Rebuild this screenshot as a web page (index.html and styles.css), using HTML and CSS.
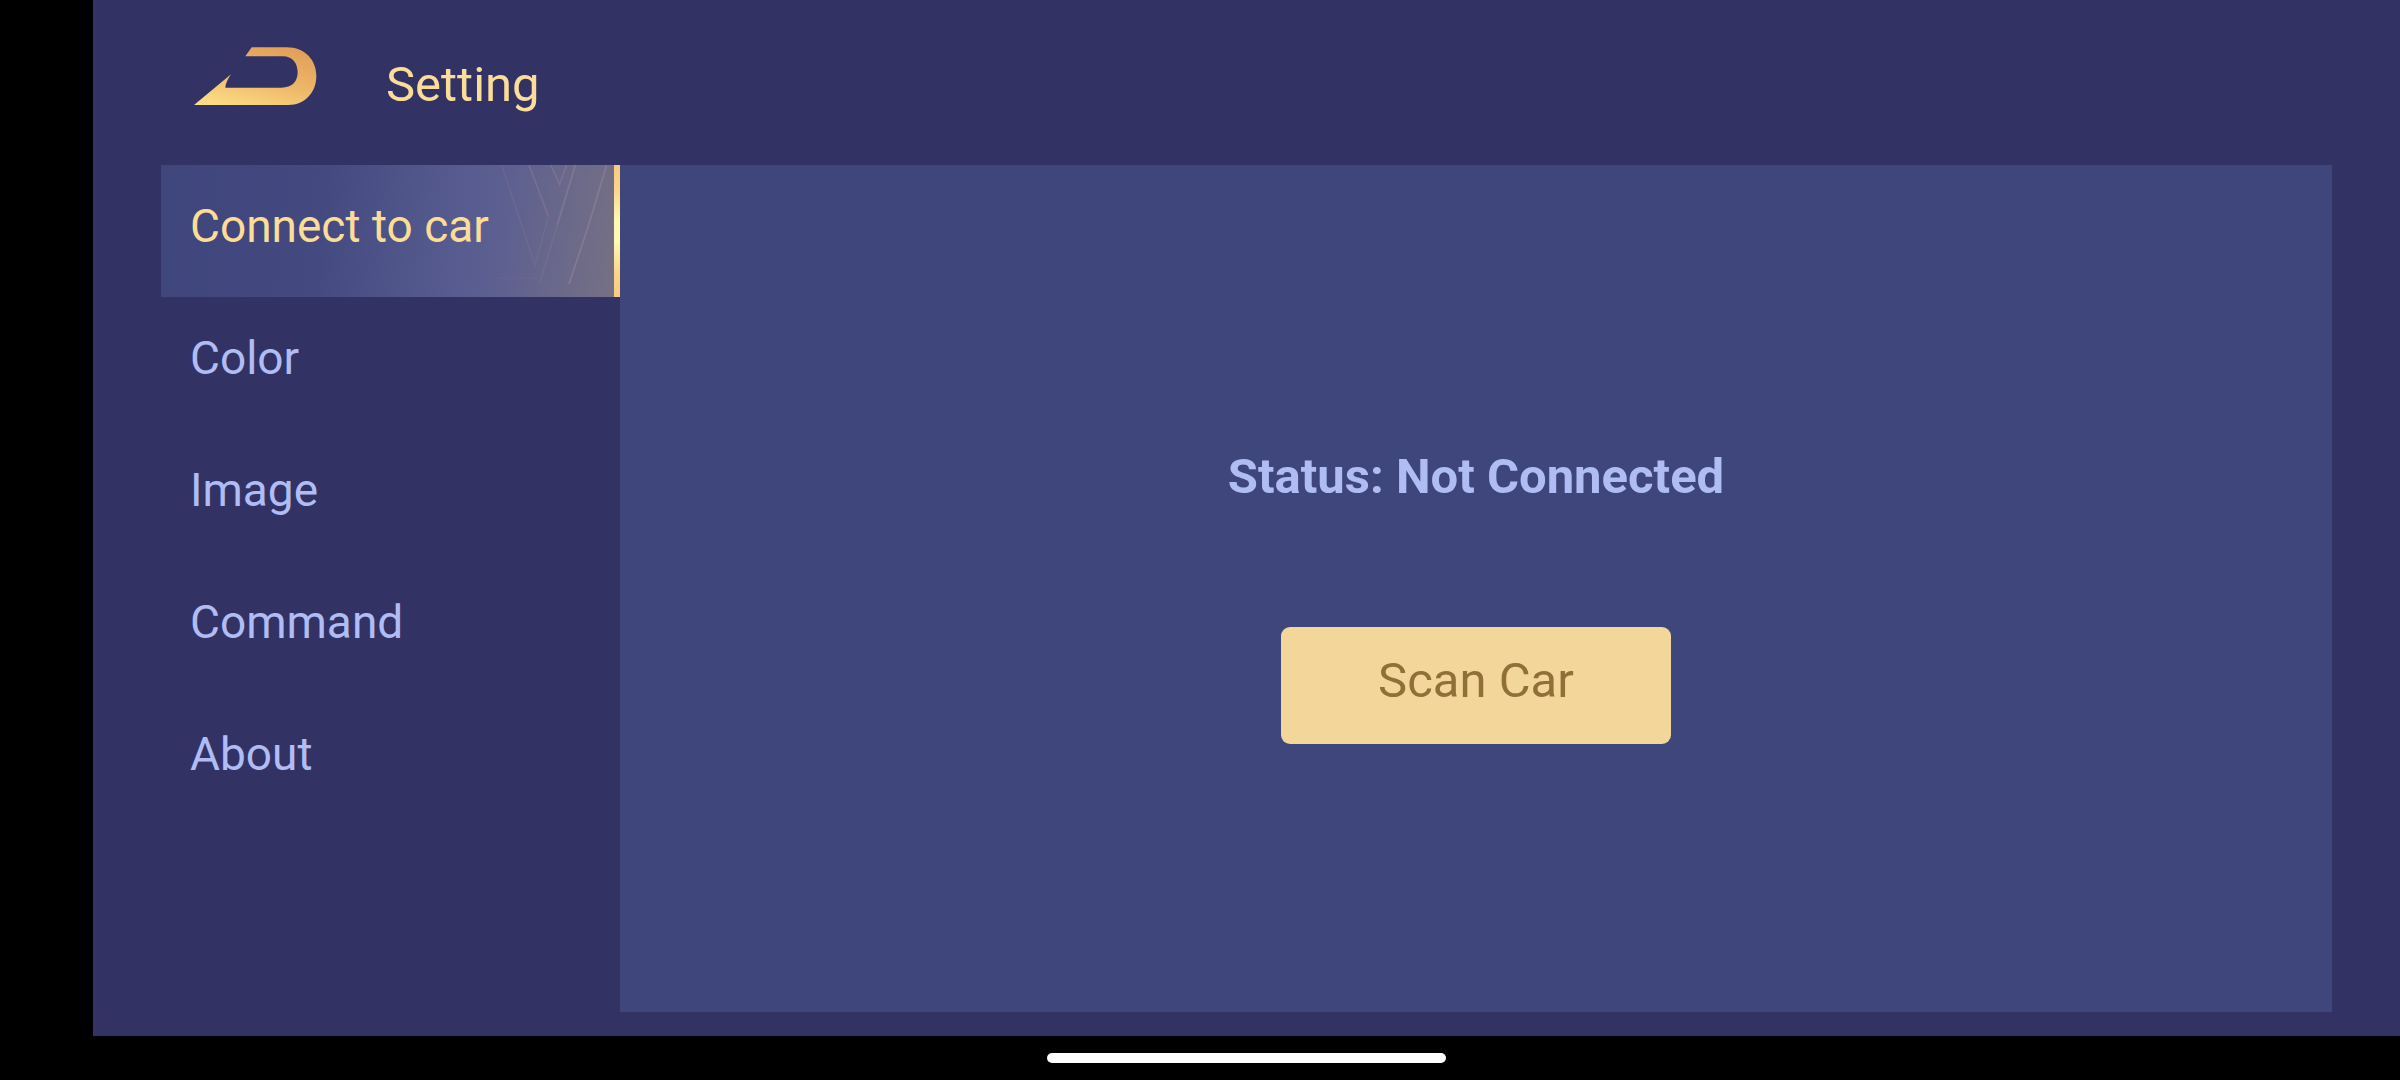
FILE: index.html
```html
<!DOCTYPE html>
<html lang="en">
<head>
<meta charset="utf-8">
<meta name="viewport" content="width=device-width, initial-scale=1">
<title>Setting</title>
<link rel="stylesheet" href="styles.css">
</head>
<body>
<div class="app">
  <header class="header">
    <svg class="logo" viewBox="73 81 369 174" aria-hidden="true">
      <defs>
        <linearGradient id="gold" x1="0.2" y1="1" x2="0.75" y2="0">
          <stop offset="0" stop-color="#fbdd86"/>
          <stop offset="0.5" stop-color="#edb768"/>
          <stop offset="1" stop-color="#e2a05a"/>
        </linearGradient>
      </defs>
      <path fill="url(#gold)" d="M73 255 L184 163 Q168 186 167 203 H335 C367 203 384 185 384 157 C384 129 367 109 340 109 H227 L246 82 H350 C408 82 440 122 440 168 C440 215 408 255 355 255 Z"/>
    </svg>
    <h1 class="title">Setting</h1>
  </header>
  <main class="content">
    <nav class="menu" aria-label="Settings">
      <a class="item active" href="#connect" aria-current="page">
        <svg class="art" viewBox="0 45 540 396" aria-hidden="true">
          <g fill="none" stroke="#8c7c96" stroke-width="5">
            <path opacity="0.25" d="M185 45 L285 345 L325 200"/>
            <path opacity="0.5" d="M267 45 L325 198"/>
            <path opacity="0.5" d="M332 45 L359 103 L380 45"/>
            <path opacity="0.7" d="M406 45 L352 225"/>
            <path opacity="0.3" d="M352 225 L300 395"/>
            <path opacity="0.15" d="M175 385 H295"/>
            <path opacity="0.8" d="M500 45 L443 235 L387 402"/>
          </g>
        </svg>
        <span class="label">Connect to car</span>
      </a>
      <a class="item" href="#color">Color</a>
      <a class="item" href="#image">Image</a>
      <a class="item" href="#command">Command</a>
      <a class="item" href="#about">About</a>
    </nav>
    <section class="panel" id="connect">
      <p class="status">Status: Not Connected</p>
      <button class="scan" type="button">Scan Car</button>
    </section>
  </main>
</div>
<footer class="system"><div class="handle"></div></footer>
</body>
</html>
```
FILE: styles.css
```css
* {
  box-sizing: border-box;
}

body {
  margin: 0;
  min-height: 100vh;
  display: flex;
  flex-direction: column;
  background: #000;
  color: #b0bdf5;
  font-family: Roboto, sans-serif;
}

.app {
  flex: 1;
  display: flex;
  flex-direction: column;
  margin-left: 93px;
  padding: 0 68px 24px;
  background: #323265;
}

.header {
  display: flex;
  align-items: flex-start;
  gap: 69px;
  height: 165px;
  padding: 47px 0 0 33px;
}

.logo {
  width: 123px;
  height: 58px;
}

.title {
  margin: 8px 0 0;
  color: #fbdd98;
  font-size: 49px;
  font-weight: 400;
  line-height: 60px;
}

.content {
  flex: 1;
  display: flex;
}

.menu {
  width: 459px;
  flex-shrink: 0;
}

.item {
  position: relative;
  display: flex;
  align-items: center;
  height: 132px;
  padding: 0 0 10px 29px;
  color: inherit;
  font-size: 46px;
  line-height: 60px;
  text-decoration: none;
}

.active {
  color: #fbdd98;
  background:
    linear-gradient(#fbc97f, #fdd68c 20%, #fffab0 42%, #fffab4 58%, #fdd68c 80%, #fbc97f) right / 6px 100% no-repeat,
    linear-gradient(97deg, #3f467c, #444980 35%, #50558a 54%, #585c91 66%, #5f618f 76%, #6b698a 87%, #777184);
}

.art {
  position: absolute;
  top: 0;
  right: 0;
  width: 180px;
  height: 132px;
}

.label {
  position: relative;
}

.panel {
  flex: 1;
  display: flex;
  flex-direction: column;
  align-items: center;
  justify-content: center;
  gap: 120px;
  padding-top: 14px;
  background: #3f467c;
}

.status {
  margin: 0;
  font-size: 49px;
  font-weight: 700;
  line-height: 60px;
}

.scan {
  width: 390px;
  height: 117px;
  padding: 0 0 10px;
  border: 0;
  border-radius: 9px;
  background: #f3d699;
  color: #916f38;
  font: inherit;
  font-size: 49px;
  line-height: 60px;
}

.system {
  display: flex;
  justify-content: center;
  height: 44px;
  padding: 17px 0 0 93px;
}

.handle {
  width: 399px;
  height: 10px;
  border-radius: 5px;
  background: #fff;
}
```
